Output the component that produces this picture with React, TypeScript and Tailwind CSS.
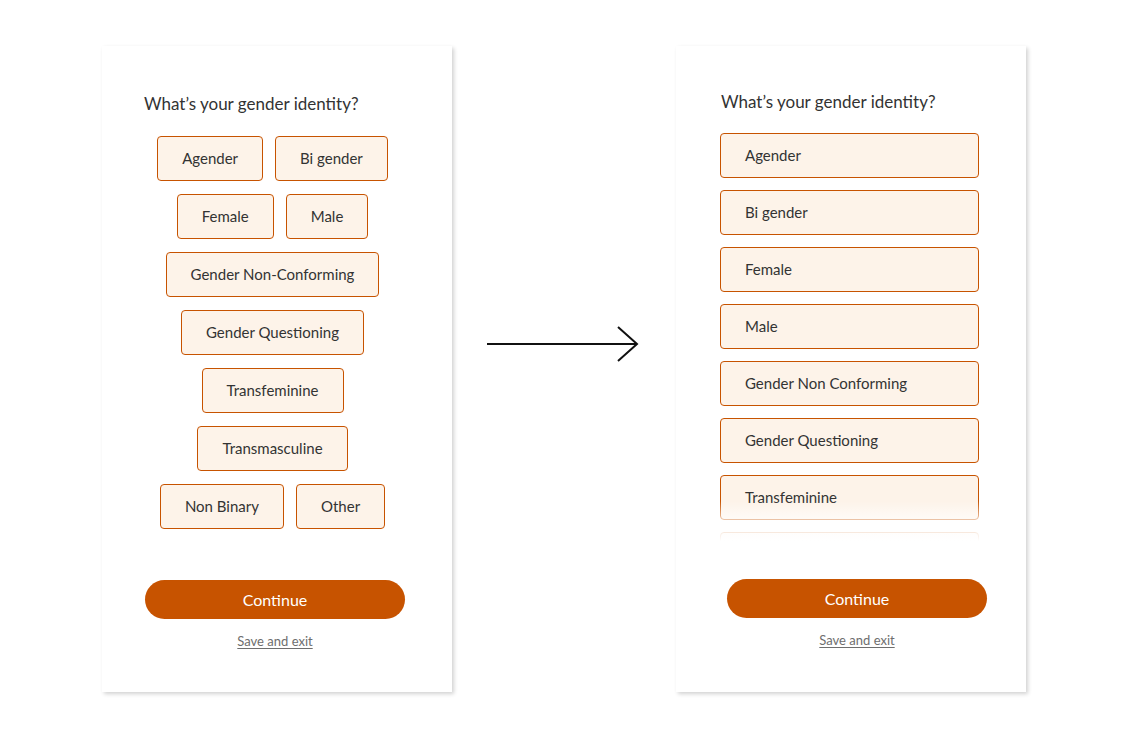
import React from 'react';

const font = { fontFamily: 'Lato, "Open Sans", sans-serif' };

const rows = [
  ['Agender', 'Bi gender'],
  ['Female', 'Male'],
  ['Gender Non-Conforming'],
  ['Gender Questioning'],
  ['Transfeminine'],
  ['Transmasculine'],
  ['Non Binary', 'Other'],
];

const listItems = [
  'Agender',
  'Bi gender',
  'Female',
  'Male',
  'Gender Non Conforming',
  'Gender Questioning',
  'Transfeminine',
  'Transmasculine',
  'Non Binary',
  'Other',
];

function Footer() {
  return (
    <>
      <button className="h-[39px] w-[260px] rounded-full bg-[#c75300] text-[16px] text-white">Continue</button>
      <div className="mt-[9px] w-[260px] text-center">
        <a className="text-[13px] text-[#6e6e6e] underline underline-offset-2">Save and exit</a>
      </div>
    </>
  );
}

function WrapCard() {
  return (
    <div className="h-[646px] w-[350px] shrink-0 bg-white pl-[42px] pt-[46px] shadow-[2px_2px_4px_rgba(0,0,0,0.18)]">
      <h2 className="text-[17px] leading-[24px] text-[#333]">What’s your gender identity?</h2>
      <div className="mt-[20px] flex w-[257px] flex-col items-center gap-[13px]">
        {rows.map((row, i) => (
          <div key={i} className="flex gap-[12px]">
            {row.map((label) => (
              <button
                key={label}
                className="h-[45px] rounded-[4px] border border-[#c75300] bg-[#fdf3e9] px-[24px] text-[15px] text-[#333]"
              >
                {label}
              </button>
            ))}
          </div>
        ))}
      </div>
      <div className="ml-[1px] mt-[51px]">
        <Footer />
      </div>
    </div>
  );
}

function ListCard() {
  return (
    <div className="h-[646px] w-[350px] shrink-0 bg-white pt-[44px] shadow-[2px_2px_4px_rgba(0,0,0,0.18)]">
      <h2 className="pl-[45px] text-[17px] leading-[24px] text-[#333]">What’s your gender identity?</h2>
      <div className="relative ml-[44px] mt-[19px] h-[408px] w-[259px] overflow-hidden">
        <div className="flex flex-col gap-[12px]">
          {listItems.map((label) => (
            <button
              key={label}
              className="h-[45px] w-full shrink-0 rounded-[4px] border border-[#c75300] bg-[#fdf3e9] pl-[24px] text-left text-[15px] text-[#333]"
            >
              {label}
            </button>
          ))}
        </div>
        <div className="pointer-events-none absolute bottom-0 left-0 right-0 h-[40px] bg-gradient-to-b from-white/0 via-white/70 to-white" />
      </div>
      <div className="ml-[51px] mt-[38px]">
        <Footer />
      </div>
    </div>
  );
}

export default function App() {
  return (
    <div className="flex h-[740px] w-[1128px] items-start justify-center bg-white pt-[46px]" style={font}>
      <WrapCard />
      <svg className="ml-[35px] mr-[37px] mt-[278px] shrink-0" width="152" height="40" viewBox="0 0 152 40">
        <line x1="0" y1="20" x2="150" y2="20" stroke="#111" strokeWidth="2" />
        <polyline points="131,3 150,20 131,37" fill="none" stroke="#111" strokeWidth="2" />
      </svg>
      <ListCard />
    </div>
  );
}
